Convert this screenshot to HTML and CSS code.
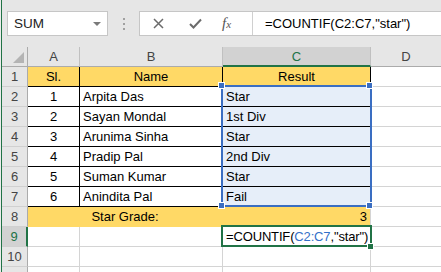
FILE: index.html
```html
<!DOCTYPE html>
<html>
<head>
<meta charset="utf-8">
<link rel="stylesheet" href="styles.css">
</head>
<body>
<div class="app">
  <div class="fbar">
    <div class="namebox"><span>SUM</span><span class="arrow"></span></div>
    <div class="sep"><i></i><i></i><i></i></div>
    <div class="fbox">
      <div class="btns">
        <svg class="ix" width="11" height="11" viewBox="0 0 11 11"><path d="M1 1L10 10M10 1L1 10" stroke="#6b6b6b" stroke-width="1.5" fill="none"/></svg>
        <svg class="ick" width="13" height="11" viewBox="0 0 13 11"><path d="M1 6L4.5 9.5L12 1.5" stroke="#6b6b6b" stroke-width="2" fill="none"/></svg>
        <span class="fx">f<small>x</small></span>
      </div>
      <div class="input">=COUNTIF(C2:C7,"star")</div>
    </div>
  </div>
  <div class="sheet">
    <div class="grid">
      <div class="corner"><span class="tri"></span></div>
      <div class="ch">A</div><div class="ch">B</div><div class="ch on">C</div><div class="ch">D</div>

      <div class="rh">1</div>
      <div class="c y bk ctr">Sl.</div><div class="c y bk ctr">Name</div><div class="c y bk ctr">Result</div><div class="c"></div>

      <div class="rh">2</div>
      <div class="c bk ctr">1</div><div class="c bk">Arpita Das</div><div class="c bk hl">Star</div><div class="c"></div>
      <div class="rh">3</div>
      <div class="c bk ctr">2</div><div class="c bk">Sayan Mondal</div><div class="c bk hl">1st Div</div><div class="c"></div>
      <div class="rh">4</div>
      <div class="c bk ctr">3</div><div class="c bk">Arunima Sinha</div><div class="c bk hl">Star</div><div class="c"></div>
      <div class="rh">5</div>
      <div class="c bk ctr">4</div><div class="c bk">Pradip Pal</div><div class="c bk hl">2nd Div</div><div class="c"></div>
      <div class="rh">6</div>
      <div class="c bk ctr">5</div><div class="c bk">Suman Kumar</div><div class="c bk hl">Star</div><div class="c"></div>
      <div class="rh">7</div>
      <div class="c bk ctr">6</div><div class="c bk">Anindita Pal</div><div class="c bk hl">Fail</div><div class="c"></div>

      <div class="rh">8</div>
      <div class="c y merge ctr">Star Grade:</div><div class="c y rt">3</div><div class="c"></div>

      <div class="rh on">9</div>
      <div class="c"></div><div class="c"></div><div class="c formula">=COUNTIF(<span class="ref">C2:C7</span>,"star")</div><div class="c"></div>
      <div class="rh">10</div>
      <div class="c"></div><div class="c"></div><div class="c"></div><div class="c"></div>
      <div class="rh"></div>
      <div class="c"></div><div class="c"></div><div class="c"></div><div class="c"></div>
    </div>
    <div class="sel"></div>
    <span class="hd h1"></span><span class="hd h2"></span><span class="hd h3"></span><span class="hd h4"></span>
    <div class="act"></div>
    <span class="fill"></span>
  </div>
</div>
</body>
</html>
```
FILE: styles.css
```css
html, body {
  margin: 0;
  padding: 0;
}
body {
  width: 441px;
  height: 272px;
  overflow: hidden;
  background: #ececec;
  font-family: "Liberation Sans", Arial, sans-serif;
  font-size: 13px;
  color: #000;
}
.app {
  margin-left: 1px;
  border-left: 1px solid #217346;
  height: 272px;
  overflow: hidden;
  background: #fff;
}
.fbar {
  height: 47px;
  box-sizing: border-box;
  background: #e6e6e6;
  padding: 11px 0 0 5px;
  display: flex;
  align-items: flex-start;
}
.namebox {
  width: 101px;
  height: 25px;
  box-sizing: border-box;
  background: #fff;
  border: 1px solid #c6c6c6;
  display: flex;
  align-items: center;
  padding-left: 6px;
  color: #222;
  font-size: 13.5px;
}
.arrow {
  margin-left: auto;
  margin-right: 6px;
  width: 0;
  height: 0;
  border-left: 4px solid transparent;
  border-right: 4px solid transparent;
  border-top: 4px solid #7a7a7a;
}
.sep {
  width: 31px;
  height: 25px;
  display: flex;
  flex-direction: column;
  align-items: center;
  justify-content: center;
  gap: 3px;
}
.sep i {
  display: block;
  width: 2px;
  height: 2px;
  background: #a0a0a0;
}
.fbox {
  flex: 1;
  height: 25px;
  box-sizing: border-box;
  background: #fff;
  border: 1px solid #c6c6c6;
  border-right: none;
  display: flex;
}
.btns {
  width: 112px;
  flex: none;
  display: flex;
  align-items: center;
}
.ix { margin-left: 13px; }
.ick { margin-left: 25px; }
.fx {
  margin-left: 20px;
  font-family: "Liberation Serif", "Times New Roman", serif;
  font-style: italic;
  font-size: 15px;
  color: #555;
}
.fx small {
  font-size: 11px;
}
.input {
  flex: 1;
  border-left: 1px solid #d0d0d0;
  padding-left: 12px;
  line-height: 23px;
  white-space: nowrap;
  color: #000;
}
.sheet {
  position: relative;
}
.grid {
  display: grid;
  grid-template-columns: 26px 52px 143px 148px 71px;
  grid-template-rows: repeat(12, 20px);
}
.grid > div {
  box-sizing: border-box;
  overflow: hidden;
  white-space: nowrap;
}
.corner {
  background: #e6e6e6;
  border-right: 1px solid #ababab;
  border-bottom: 1px solid #ababab;
  display: flex;
  align-items: flex-end;
  justify-content: flex-end;
  padding: 0 3px 3px 0;
}
.tri {
  width: 0;
  height: 0;
  border-left: 11px solid transparent;
  border-bottom: 11px solid #b4b4b4;
}
.ch {
  background: #e6e6e6;
  border-right: 1px solid #c0c0c0;
  border-bottom: 1px solid #ababab;
  text-align: center;
  line-height: 20px;
  color: #444;
}
.ch.on {
  background: #d2d2d2;
  color: #217346;
  border-bottom: 2px solid #217346;
}
.rh {
  background: #e6e6e6;
  border-right: 1px solid #ababab;
  border-bottom: 1px solid #d0d0d0;
  text-align: center;
  line-height: 20px;
  color: #444;
}
.rh.on {
  background: #d2d2d2;
  color: #217346;
  border-right: 2px solid #217346;
}
.c {
  border-right: 1px solid #d4d4d4;
  border-bottom: 1px solid #d4d4d4;
  padding: 0 3px;
  line-height: 20px;
}
.y { background: #ffd966; }
.bk {
  border-right-color: #000;
  border-bottom-color: #000;
}
.hl { background: #e6eef9; }
.ctr { text-align: center; }
.rt { text-align: right; }
.merge {
  grid-column: span 2;
  border-right-color: #ffd966;
  border-bottom-color: #ffd966;
}
.y.rt { border-bottom-color: #ffd966; }
.grid > .formula {
  overflow: visible;
  letter-spacing: -0.15px;
}
.ref { color: #3470c8; }
.sel {
  position: absolute;
  left: 219px;
  top: 38px;
  width: 151px;
  height: 122px;
  box-sizing: border-box;
  border: 2px solid #3a6ec2;
  pointer-events: none;
}
.hd {
  position: absolute;
  width: 5px;
  height: 5px;
  background: #3a6ec2;
  border: 1px solid #fff;
}
.h1 { left: 216px; top: 35px; }
.h2 { left: 364px; top: 35px; }
.h3 { left: 216px; top: 155px; }
.h4 { left: 364px; top: 155px; }
.act {
  position: absolute;
  left: 219px;
  top: 178px;
  width: 151px;
  height: 22px;
  box-sizing: border-box;
  border: 2px solid #217346;
}
.fill {
  position: absolute;
  left: 365px;
  top: 196px;
  width: 5px;
  height: 5px;
  background: #217346;
  border: 1px solid #fff;
}
```
